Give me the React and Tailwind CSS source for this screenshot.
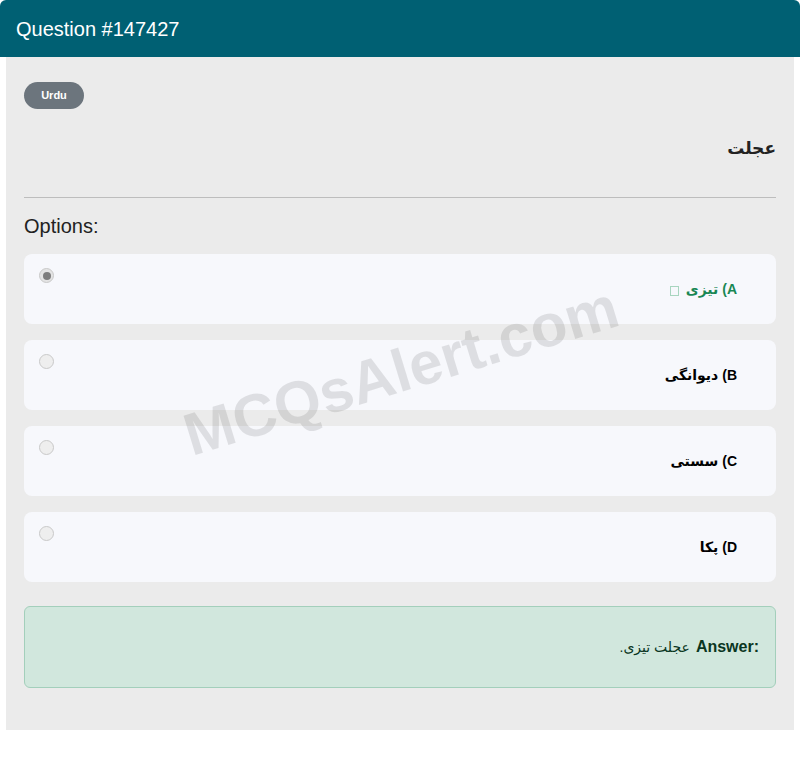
import React from "react";

const OPTIONS = [
  { key: "A", text: "تیزی", correct: true },
  { key: "B", text: "دیوانگی" },
  { key: "C", text: "سستی" },
  { key: "D", text: "پکا" },
];

function Option({ opt }) {
  return (
    <div className="h-[70px] rounded-lg bg-[#f7f8fc] flex items-start pl-[15px] pt-[14px] pr-[39px]">
      <span
        className={`w-[15px] h-[15px] rounded-full border border-[#c9c9c9] flex items-center justify-center shrink-0 ${
          opt.correct ? "bg-[#e4e4e4]" : "bg-[#eeeeee]"
        }`}
      >
        {opt.correct && <span className="w-[8px] h-[8px] rounded-full bg-[#7d7d7d]" />}
      </span>
      <div
        dir="rtl"
        className={`flex-1 self-stretch flex items-center -mt-[14px] text-[14px] font-bold ${
          opt.correct ? "text-[#198754]" : "text-black"
        }`}
      >
        <span>{opt.key}) {opt.text}</span>
        {opt.correct && (
          <span className="inline-block w-[9px] h-[10px] border border-[#a8d5bf] mr-[7px] mt-[3px]" />
        )}
      </div>
    </div>
  );
}

export default function App() {
  return (
    <div className="w-[800px] h-[760px] bg-white font-['Liberation_Sans','DejaVu_Sans',sans-serif]">
      <div className="h-[57px] bg-[#006073] rounded-t-md flex items-center px-4">
        <h1 className="text-white text-[20px] leading-none">Question #147427</h1>
      </div>
      <div className="relative mx-[6px] h-[673px] bg-[#ebebeb] px-[18px] pt-[25px] overflow-hidden">
        <span className="inline-flex items-center justify-center w-[60px] h-[27px] rounded-full bg-[#6c757d] text-white text-[11px] font-bold">
          Urdu
        </span>
        <h2 dir="rtl" className="mt-[28px] text-[17px] font-bold text-[#222] leading-[24px]">
          عجلت
        </h2>
        <hr className="mt-[36px] border-0 border-t border-[#bdbdbd]" />
        <p className="mt-[16px] text-[20px] text-[#222] leading-[24px]">Options:</p>
        <div className="mt-[16px] flex flex-col gap-4">
          {OPTIONS.map((o) => (
            <Option key={o.key} opt={o} />
          ))}
        </div>
        {/* answer box: arabic text sits left of the "Answer:" label */}
        <div className="mt-[24px] h-[82px] rounded-md bg-[#d1e7dd] border border-[#a3cfbb] flex items-center justify-end gap-[6px] pr-[16px] text-[16px] text-[#0a3622]">
          <span dir="rtl" className="text-[14px]">عجلت تیزی.</span>
          <span className="font-bold">Answer:</span>
        </div>
        <div className="pointer-events-none absolute left-[180px] top-[350px] -rotate-[17deg] origin-left text-[60px] font-bold text-black/10 leading-none whitespace-nowrap select-none">
          MCQsAlert.com
        </div>
      </div>
    </div>
  );
}
